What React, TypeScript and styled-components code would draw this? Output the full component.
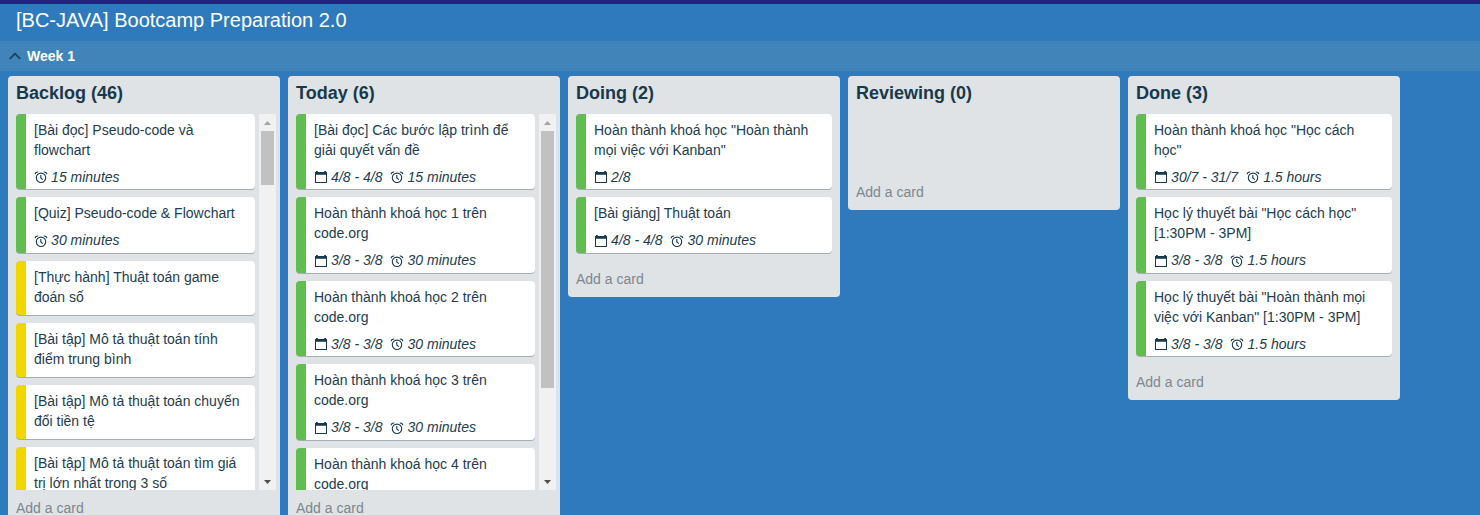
import React from "react";
import styled, { createGlobalStyle } from "styled-components";

const Global = createGlobalStyle`
  * { box-sizing: border-box; }
  html, body { margin: 0; height: 100%; overflow: hidden; }
  body {
    background: #2f7abd;
    font-family: "Liberation Sans", Arial, sans-serif;
    font-size: 14px;
    line-height: 20px;
    color: #223c50;
  }
`;

const Page = styled.div`
  display: flex;
  flex-direction: column;
  height: 515px;
  overflow: hidden;
`;

const TopStrip = styled.div`
  flex: none;
  height: 4px;
  background: #26237f;
`;

const Header = styled.header`
  flex: none;
  height: 37px;
  padding: 0 16px;
  font-size: 20px;
  line-height: 33px;
  color: #fff;
`;

const Swimlane = styled.div`
  flex: none;
  display: flex;
  align-items: center;
  gap: 6px;
  height: 30px;
  padding-left: 9px;
  background: #4084ba;
  color: #fff;
  font-weight: bold;
`;

const Lists = styled.main`
  display: flex;
  align-items: flex-start;
  gap: 8px;
  padding: 5px 8px 0;
`;

const List = styled.section`
  flex: none;
  width: 272px;
  border-radius: 4px;
  background: #dfe3e6;
`;

const ListTitle = styled.h2`
  margin: 0;
  height: 38px;
  padding: 0 8px;
  font-size: 18px;
  line-height: 34px;
  color: #17394d;
`;

const ListBody = styled.div<{ $scroll: boolean }>`
  display: flex;
  gap: 4px;
  min-height: 60px;
  height: ${(p) => (p.$scroll ? "376px" : "auto")};
  padding: 0 ${(p) => (p.$scroll ? 4 : 8)}px 0 8px;
`;

const Cards = styled.div`
  flex: 1;
  min-width: 0;
  overflow: hidden;
`;

const Card = styled.article<{ $label: string }>`
  margin-bottom: 8px;
  padding: 6px 14px 8px 8px;
  border-left: 10px solid ${(p) => p.$label};
  border-radius: 4px;
  background: #fff;
  box-shadow: 0 1px 0 #a3afb8;
`;

const CardText = styled.p`
  margin: 0;
  white-space: pre;
`;

const Badges = styled.div`
  display: flex;
  gap: 8px;
  height: 21.4px;
  padding-top: 7px;
  font-style: italic;
`;

const Badge = styled.span`
  display: flex;
  align-items: center;
  gap: 3.1px;
  height: 20px;
  white-space: nowrap;
  svg { flex: none; margin-top: 0.8px; }
`;

const Track = styled.div`
  flex: none;
  display: flex;
  flex-direction: column;
  align-items: center;
  width: 17px;
  background: #f1f1f1;
`;

const ArrowBox = styled.div`
  display: flex;
  align-items: center;
  justify-content: center;
  height: 17px;
`;

const Thumb = styled.div<{ $size: number }>`
  width: 13px;
  height: ${(p) => p.$size}px;
  margin-bottom: auto;
  background: #c1c1c1;
`;

const AddCard = styled.div`
  height: 36px;
  padding: 0 8px;
  line-height: 36px;
  color: #7c868f;
`;

const Chevron = () => (
  <svg width="12" height="8" viewBox="0 0 12 8" fill="none" stroke="#17435f" strokeWidth="1.8">
    <path d="M.8 6.8L6 1.6L11.2 6.8" />
  </svg>
);

const CalendarIcon = () => (
  <svg width="14" height="14" viewBox="0 0 14 14">
    <path
      fill="#17394d"
      fillRule="evenodd"
      d="M2 1h1.8v1h6.4V1H12v1h1v11H1V2h1zM2 4.8V12h10V4.8z"
    />
  </svg>
);

const ClockIcon = () => (
  <svg width="14" height="14" viewBox="0 0 14 14" fill="none" stroke="#17394d" strokeWidth="1.1">
    <circle cx="7" cy="7.8" r="4.7" />
    <path d="M6.8 5v3l2 1.6M1.2 4.3Q1.4 1.9 4.2 2M12.8 4.3Q12.6 1.9 9.8 2" />
  </svg>
);

const GREEN = "#61bd4f";
const YELLOW = "#f2d600";

type CardData = { text: string; date?: string; time?: string; color?: string };
type ListData = { title: string; cards: CardData[]; thumb?: number };

const LISTS: ListData[] = [
  {
    title: "Backlog (46)",
    thumb: 54,
    cards: [
      { text: "[Bài đọc] Pseudo-code và\nflowchart", time: "15 minutes" },
      { text: "[Quiz] Pseudo-code & Flowchart", time: "30 minutes" },
      { text: "[Thực hành] Thuật toán game\nđoán số", color: YELLOW },
      { text: "[Bài tập] Mô tả thuật toán tính\nđiểm trung bình", color: YELLOW },
      { text: "[Bài tập] Mô tả thuật toán chuyển\nđổi tiền tệ", color: YELLOW },
      { text: "[Bài tập] Mô tả thuật toán tìm giá\ntrị lớn nhất trong 3 số", color: YELLOW },
    ],
  },
  {
    title: "Today (6)",
    thumb: 257,
    cards: [
      { text: "[Bài đọc] Các bước lập trình để\ngiải quyết vấn đề", date: "4/8 - 4/8", time: "15 minutes" },
      { text: "Hoàn thành khoá học 1 trên\ncode.org", date: "3/8 - 3/8", time: "30 minutes" },
      { text: "Hoàn thành khoá học 2 trên\ncode.org", date: "3/8 - 3/8", time: "30 minutes" },
      { text: "Hoàn thành khoá học 3 trên\ncode.org", date: "3/8 - 3/8", time: "30 minutes" },
      { text: "Hoàn thành khoá học 4 trên\ncode.org" },
    ],
  },
  {
    title: "Doing (2)",
    cards: [
      { text: 'Hoàn thành khoá học "Hoàn thành\nmọi việc với Kanban"', date: "2/8" },
      { text: "[Bài giảng] Thuật toán", date: "4/8 - 4/8", time: "30 minutes" },
    ],
  },
  { title: "Reviewing (0)", cards: [] },
  {
    title: "Done (3)",
    cards: [
      { text: 'Hoàn thành khoá học "Học cách\nhọc"', date: "30/7 - 31/7", time: "1.5 hours" },
      { text: 'Học lý thuyết bài "Học cách học"\n[1:30PM - 3PM]', date: "3/8 - 3/8", time: "1.5 hours" },
      { text: 'Học lý thuyết bài "Hoàn thành mọi\nviệc với Kanban" [1:30PM - 3PM]', date: "3/8 - 3/8", time: "1.5 hours" },
    ],
  },
];

const Scrollbar = ({ size }: { size: number }) => (
  <Track>
    <ArrowBox>
      <svg width="7" height="4" viewBox="0 0 7 4"><path d="M0 4L3.5 0L7 4z" fill="#a3a3a3" /></svg>
    </ArrowBox>
    <Thumb $size={size} />
    <ArrowBox>
      <svg width="7" height="4" viewBox="0 0 7 4"><path d="M0 0L3.5 4L7 0z" fill="#505050" /></svg>
    </ArrowBox>
  </Track>
);

export default function App() {
  return (
    <Page>
      <Global />
      <TopStrip />
      <Header>[BC-JAVA] Bootcamp Preparation 2.0</Header>
      <Swimlane>
        <Chevron />
        Week 1
      </Swimlane>
      <Lists>
        {LISTS.map((list) => (
          <List key={list.title}>
            <ListTitle>{list.title}</ListTitle>
            <ListBody $scroll={!!list.thumb}>
              <Cards>
                {list.cards.map((card) => (
                  <Card key={card.text} $label={card.color ?? GREEN}>
                    <CardText>{card.text}</CardText>
                    {(card.date || card.time) && (
                      <Badges>
                        {card.date && <Badge><CalendarIcon />{card.date}</Badge>}
                        {card.time && <Badge><ClockIcon />{card.time}</Badge>}
                      </Badges>
                    )}
                  </Card>
                ))}
              </Cards>
              {list.thumb && <Scrollbar size={list.thumb} />}
            </ListBody>
            <AddCard>Add a card</AddCard>
          </List>
        ))}
      </Lists>
    </Page>
  );
}
